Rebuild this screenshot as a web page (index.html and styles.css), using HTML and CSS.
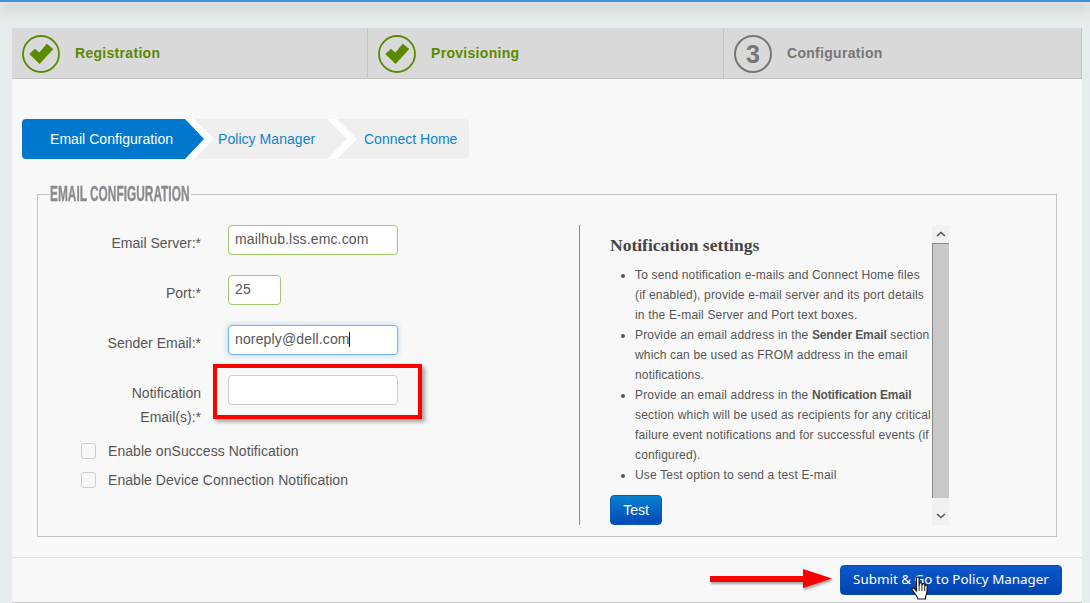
FILE: index.html
```html
<!DOCTYPE html>
<html>
<head>
    <title>Email Configuration</title>
    <link rel="stylesheet" href="styles.css">
</head>
<body>
    <div class="topbar"></div>
    <div class="panel">
        <div class="steps">
            <div class="step done">
                <svg class="step-icon" width="38" height="38" viewBox="0 0 38 38">
                    <circle cx="19" cy="19" r="18" fill="none" stroke="#5b8a00" stroke-width="1.8"/>
                    <path d="M7.3 18.9 13 13.8 17.3 17.4 24.8 8.8 31.3 13.9 17.6 29z" fill="#5b8a00"/>
                </svg>
                <span>Registration</span>
            </div>
            <div class="step done">
                <svg class="step-icon" width="38" height="38" viewBox="0 0 38 38">
                    <circle cx="19" cy="19" r="18" fill="none" stroke="#5b8a00" stroke-width="1.8"/>
                    <path d="M7.3 18.9 13 13.8 17.3 17.4 24.8 8.8 31.3 13.9 17.6 29z" fill="#5b8a00"/>
                </svg>
                <span>Provisioning</span>
            </div>
            <div class="step current">
                <div class="step-number">3</div>
                <span>Configuration</span>
            </div>
        </div>

        <ul class="wizard">
            <li class="wizard-item first active">Email Configuration</li>
            <li class="wizard-item middle">Policy Manager</li>
            <li class="wizard-item last">Connect Home</li>
        </ul>

        <fieldset class="box">
            <legend class="box-title"><span>Email Configuration</span></legend>
            <div class="box-body">
                <form class="email-form">
                    <div class="form-row">
                        <label for="server">Email Server:*</label>
                        <input class="valid" type="text" id="server" value="mailhub.lss.emc.com">
                    </div>
                    <div class="form-row">
                        <label for="port">Port:*</label>
                        <input class="valid short" type="text" id="port" value="25">
                    </div>
                    <div class="form-row">
                        <label for="sender">Sender Email:*</label>
                        <div class="caret-wrap">
                            <input class="focused" type="text" id="sender" value="noreply@dell.com">
                            <i class="caret"></i>
                        </div>
                    </div>
                    <div class="form-row">
                        <label for="notify">Notification Email(s):*</label>
                        <div class="caret-wrap">
                            <input type="text" id="notify">
                            <div class="red-box"></div>
                        </div>
                    </div>
                    <div class="check-row">
                        <input type="checkbox" id="success">
                        <label for="success">Enable onSuccess Notification</label>
                    </div>
                    <div class="check-row">
                        <input type="checkbox" id="device">
                        <label for="device">Enable Device Connection Notification</label>
                    </div>
                </form>

                <div class="help">
                    <div class="help-text">
                        <h3>Notification settings</h3>
                        <ul>
                            <li>To send notification e-mails and Connect Home files<br>(if enabled), provide e-mail server and its port details in the E-mail Server and Port text boxes.</li>
                            <li>Provide an email address in the <b>Sender Email</b> section which can be used as FROM address in the email notifications.</li>
                            <li>Provide an email address in the <b>Notification Email</b> section which will be used as recipients for any critical failure event notifications and for successful events (if configured).</li>
                            <li>Use Test option to send a test E-mail</li>
                        </ul>
                        <button class="btn-test" type="button">Test</button>
                    </div>
                    <div class="scrollbar">
                        <div class="scroll-btn">
                            <svg width="10" height="6" viewBox="0 0 10 6"><path d="M1 5 5 1.5 9 5" fill="none" stroke="#555" stroke-width="1.6"/></svg>
                        </div>
                        <div class="scroll-thumb"></div>
                        <div class="scroll-btn down">
                            <svg width="10" height="6" viewBox="0 0 10 6"><path d="M1 1 5 4.5 9 1" fill="none" stroke="#555" stroke-width="1.6"/></svg>
                        </div>
                    </div>
                </div>
            </div>
        </fieldset>

        <div class="footer">
            <div class="submit-wrap">
                <svg class="red-arrow" width="128" height="26" viewBox="0 0 128 26">
                    <path d="M0 10H93V3L122 12.500 93 22V16H0z" fill="#f00" style="filter: drop-shadow(1px 2px 1px rgba(0,0,0,.35))"/>
                </svg>
                <button class="btn-submit" type="button">Submit &amp; Go to Policy Manager</button>
                <svg class="hand" width="20" height="26" viewBox="0 0 20 26">
                    <path d="M5.500 2.200c0-1.600 2.600-1.600 2.600 0V10l.3-2.200c.2-1.400 2.400-1.300 2.500.1l.1 2.100.3-1.500c.3-1.300 2.300-1.100 2.400.2l.1 1.800.4-.9c.5-1 2-.6 2 .6 0 3-.2 6.300-.9 8.300-.5 1.500-.8 2.700-.9 4.500H6.900c-.3-2-1.300-3.200-2.800-5.200L1.300 14c-.9-1.300.8-2.700 2-1.500l2.200 2.300z" fill="#fff" stroke="#111" stroke-width="1.100"/>
                    <path d="M8.100 10v5M10.900 10v5M13.700 10.500V15" stroke="#111" stroke-width=".9" fill="none"/>
                </svg>
            </div>
        </div>
    </div>
</body>
</html>
```

FILE: styles.css
```css
* {
    box-sizing: border-box;
}
html, body {
    margin: 0;
    height: 603px;
    overflow: hidden;
}
body {
    font-family: "Liberation Sans", Arial, sans-serif;
    font-size: 14px;
    letter-spacing: .05px;
    color: #555;
    background-color: #e6ecec;
}
.topbar {
    height: 2px;
    background-color: #3a92da;
    box-shadow: 0 5px 12px rgba(0, 0, 0, .45);
}
.panel {
    margin: 26px 8px 0 12px;
    height: 575px;
    background-color: #f8f8f8;
    border-bottom: 1px solid #c8c8c8;
}

/* top steps */
.steps {
    display: flex;
    height: 51px;
    background-color: #d9d9d9;
    border-bottom: 1px solid #c4c4c4;
}
.step {
    display: flex;
    align-items: center;
    width: 356px;
    height: 50px;
    padding-left: 10px;
    border-right: 1px solid #c4c4c4;
    font-size: 14px;
    font-weight: bold;
    letter-spacing: .3px;
}
.step span {
    margin: -1px 0 0 15px;
}
.step-icon {
    flex: none;
    margin-top: 1px;
}
.step.done {
    color: #5b8a00;
}
.step.current {
    color: #767676;
    width: 358px;
}
.step-number {
    flex: none;
    width: 38px;
    height: 38px;
    margin-top: 1px;
    border: 2px solid #767676;
    border-radius: 50%;
    font-size: 25px;
    line-height: 34px;
    text-align: center;
    letter-spacing: 0;
}

/* sub wizard */
.wizard {
    display: flex;
    width: 447px;
    height: 40px;
    margin: 40px 0 0 10px;
    padding: 0;
    list-style: none;
    background-color: #fff;
    border-radius: 4px;
}
.wizard-item {
    height: 40px;
    line-height: 40px;
    background-color: #efefef;
    color: #0a85d1;
}
.wizard-item.active {
    background-color: #0078ce;
    color: #fff;
}
.first {
    width: 182px;
    padding-left: 28px;
    border-radius: 4px 0 0 4px;
    clip-path: polygon(0 0, 163px 0, 100% 50%, 163px 100%, 0 100%);
}
.middle {
    width: 153px;
    margin-left: -10px;
    padding-left: 24px;
    clip-path: polygon(0 0, 133px 0, 100% 50%, 133px 100%, 0 100%, 20px 50%);
}
.last {
    width: 132px;
    margin-left: -10px;
    padding-left: 27px;
    letter-spacing: 0;
    border-radius: 0 4px 4px 0;
    clip-path: polygon(0 0, 100% 0, 100% 100%, 0 100%, 20px 50%);
}

/* fieldset */
.box {
    width: 1020px;
    height: 355px;
    margin: 23px 0 0 25px;
    padding: 0;
    border: 1px solid #c4c4c4;
}
.box-title {
    width: 141px;
    height: 24px;
    margin-left: 12px;
    padding: 0;
    overflow: visible;
    white-space: nowrap;
}
.box-title span {
    display: inline-block;
    font-size: 22px;
    line-height: 24px;
    font-weight: bold;
    letter-spacing: 0;
    text-transform: uppercase;
    color: #8a8a90;
    -webkit-text-stroke: .4px #8a8a90;
    transform: scaleX(.54);
    transform-origin: left center;
}
.box-body {
    display: flex;
    height: 300px;
    margin-top: 19px;
}

/* form */
.email-form {
    width: 541px;
    padding-left: 38px;
}
.form-row {
    display: flex;
    align-items: flex-start;
    margin-bottom: 20px;
}
.form-row label {
    width: 125px;
    margin-right: 27px;
    padding-top: 6px;
    line-height: 24px;
    letter-spacing: 0;
    text-align: right;
}
.form-row input {
    display: block;
    width: 170px;
    height: 30px;
    padding: 0 6px 3px;
    border: 1px solid #ccc;
    border-radius: 4px;
    background-color: #fff;
    font-family: "Liberation Sans", Arial, sans-serif;
    font-size: 14px;
    letter-spacing: .15px;
    color: #555;
    outline: none;
}
.form-row input.valid {
    border-color: #a2c86c;
}
.form-row input.short {
    width: 53px;
}
.form-row input.focused {
    border-color: #76b6ee;
    box-shadow: 0 0 5px rgba(82, 168, 236, .5);
}
.form-row:nth-child(4) {
    margin-bottom: 7px;
}
.caret-wrap {
    position: relative;
}
.caret {
    position: absolute;
    left: 121px;
    top: 7px;
    width: 1px;
    height: 15px;
    background-color: #222;
}
.red-box {
    position: absolute;
    left: -15px;
    top: -11px;
    width: 209px;
    height: 55px;
    border: 4px solid #f00;
    box-shadow: 3px 3px 4px rgba(0, 0, 0, .35);
}
.check-row {
    display: flex;
    align-items: center;
    height: 29px;
    padding-left: 5px;
}
.check-row input {
    appearance: none;
    width: 15px;
    height: 16px;
    margin: 0 12px 0 0;
    border: 1px solid #ccc;
    border-radius: 3px;
    background-color: #f8f8f8;
}

/* help column */
.help {
    display: flex;
    width: 370px;
    padding-left: 30px;
    border-left: 1px solid #8a8a8a;
}
.help-text {
    width: 323px;
    font-size: 12px;
    line-height: 20px;
    letter-spacing: .17px;
}
.help-text h3 {
    margin: 10px 0 10px;
    font-family: "Liberation Serif", "Times New Roman", serif;
    font-size: 17.5px;
    line-height: 20px;
    letter-spacing: 0;
    color: #444;
}
.help-text ul {
    margin: 0 -2px 10px 0;
    padding-left: 25px;
}
.help-text b {
    letter-spacing: -.1px;
    color: #555;
}
.btn-test {
    display: block;
    width: 52px;
    height: 30px;
    padding: 0;
    border: 1px solid #0a5bb5;
    border-radius: 4px;
    background: linear-gradient(#0a80d0, #0048b8);
    color: #fff;
    font-family: "Liberation Sans", Arial, sans-serif;
    font-size: 14px;
}
.scrollbar {
    display: flex;
    flex-direction: column;
    width: 17px;
    background-color: #f1f1f1;
}
.scroll-btn {
    display: flex;
    align-items: center;
    justify-content: center;
    height: 18px;
}
.scroll-btn.down {
    height: 27px;
    padding-top: 9px;
}
.scroll-thumb {
    flex: 1;
    background-color: #c8c8c8;
    border-left: 1px solid #888;
    border-top: 1px solid #888;
}

/* footer */
.footer {
    display: flex;
    justify-content: flex-end;
    height: 38px;
    margin-top: 20px;
    padding: 7px 20px 0 0;
    border-top: 1px solid #e2e2e2;
}
.submit-wrap {
    position: relative;
}
.btn-submit {
    display: block;
    width: 222px;
    height: 30px;
    padding: 0 0 3px;
    border: 1px solid #0a4fb0;
    border-radius: 4px;
    background: linear-gradient(#0d58cc, #0044ae);
    color: #fff;
    font-family: "Noto Sans", sans-serif;
    font-size: 13.4px;
}
.red-arrow {
    position: absolute;
    left: -130px;
    top: 1px;
}
.hand {
    position: absolute;
    left: 71px;
    top: 11px;
}
```
